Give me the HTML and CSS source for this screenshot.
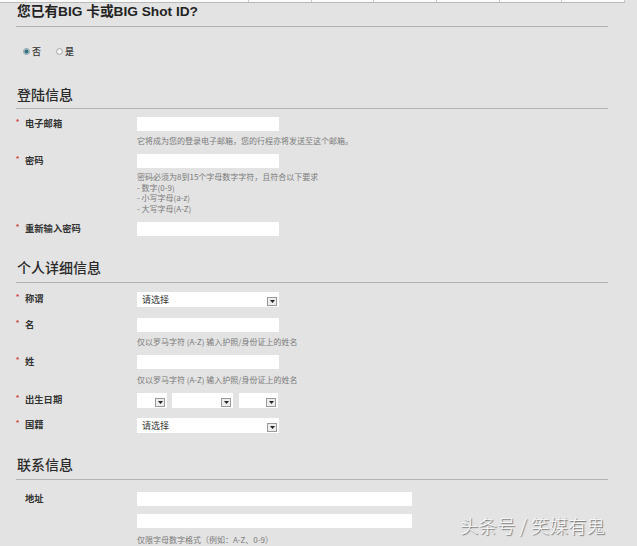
FILE: index.html
```html
<!DOCTYPE html>
<html lang="zh-CN">
<head>
<meta charset="utf-8">
<title>BIG Shot 注册</title>
<link rel="stylesheet" href="styles.css">
</head>
<body>
<div class="wrap">
  <div class="topbar">
    <span class="cell first"></span><span class="cell"></span><span class="cell"></span><span class="cell"></span><span class="cell"></span><span class="cell"></span><span class="cell"></span>
  </div>
  <div class="page">
    <h1 class="title">您已有BIG 卡或BIG Shot ID?</h1>
    <div class="radios">
      <span class="radio checked"></span><span class="rlabel">否</span>
      <span class="radio"></span><span class="rlabel">是</span>
    </div>

    <h2 class="section s1">登陆信息</h2>
    <div class="row r-email">
      <div class="label"><span class="req">*</span>电子邮箱</div>
      <div class="field">
        <input class="input" type="text">
        <div class="help">它将成为您的登录电子邮箱，您的行程亦将发送至这个邮箱。</div>
      </div>
    </div>
    <div class="row r-pass">
      <div class="label"><span class="req">*</span>密码</div>
      <div class="field">
        <input class="input" type="password">
        <div class="help multi">密码必须为8到15个字母数字字符，且符合以下要求<br>- 数字(0-9)<br>- 小写字母(a-z)<br>- 大写字母(A-Z)</div>
      </div>
    </div>
    <div class="row r-pass2">
      <div class="label"><span class="req">*</span>重新输入密码</div>
      <div class="field"><input class="input" type="password"></div>
    </div>

    <h2 class="section s2">个人详细信息</h2>
    <div class="row r-title">
      <div class="label"><span class="req">*</span>称谓</div>
      <div class="field"><div class="select wide"><span class="stext">请选择</span><span class="arrow"><svg width="5" height="3" viewBox="0 0 5 3"><path d="M0 0H5L2.5 3Z" fill="#222"/></svg></span></div></div>
    </div>
    <div class="row r-first">
      <div class="label"><span class="req">*</span>名</div>
      <div class="field">
        <input class="input" type="text">
        <div class="help">仅以罗马字符 (A-Z) 输入护照/身份证上的姓名</div>
      </div>
    </div>
    <div class="row r-last">
      <div class="label"><span class="req">*</span>姓</div>
      <div class="field">
        <input class="input" type="text">
        <div class="help h-last">仅以罗马字符 (A-Z) 输入护照/身份证上的姓名</div>
      </div>
    </div>
    <div class="row r-dob">
      <div class="label"><span class="req">*</span>出生日期</div>
      <div class="field dates">
        <div class="select d1"><span class="stext"></span><span class="arrow"><svg width="5" height="3" viewBox="0 0 5 3"><path d="M0 0H5L2.5 3Z" fill="#222"/></svg></span></div>
        <div class="select d2"><span class="stext"></span><span class="arrow"><svg width="5" height="3" viewBox="0 0 5 3"><path d="M0 0H5L2.5 3Z" fill="#222"/></svg></span></div>
        <div class="select d3"><span class="stext"></span><span class="arrow"><svg width="5" height="3" viewBox="0 0 5 3"><path d="M0 0H5L2.5 3Z" fill="#222"/></svg></span></div>
      </div>
    </div>
    <div class="row r-nat">
      <div class="label"><span class="req">*</span>国籍</div>
      <div class="field"><div class="select wide"><span class="stext">请选择</span><span class="arrow"><svg width="5" height="3" viewBox="0 0 5 3"><path d="M0 0H5L2.5 3Z" fill="#222"/></svg></span></div></div>
    </div>

    <h2 class="section s3">联系信息</h2>
    <div class="row r-addr">
      <div class="label"><span class="req blank"></span>地址</div>
      <div class="field">
        <input class="input long" type="text">
        <input class="input long second" type="text">
        <div class="help h-addr">仅限字母数字格式（例如：A-Z、0-9）</div>
      </div>
    </div>
  </div>
  <div class="watermark">头条号 / 笑媒有鬼</div>
</div>
</body>
</html>
```

FILE: styles.css
```css
html, body {
  margin: 0;
  padding: 0;
  background: #e3e3e3;
}
body {
  font-family: "Liberation Sans", "Noto Sans CJK SC", sans-serif;
  color: #333;
}
.wrap {
  position: relative;
  height: 546px;
  overflow: hidden;
}
.topbar {
  display: flex;
  width: 625px;
  height: 2px;
  background: #fbfbfb;
  border-bottom: 1px solid #b9b9b9;
}
.topbar .cell {
  width: 62px;
  border-right: 1px solid #c9c9c9;
}
.topbar .cell.first {
  width: 249px;
}
.page {
  width: 592px;
  padding-left: 16px;
}
.title {
  margin: 0;
  padding: 0 1px 5px;
  font-size: 13.7px;
  line-height: 18px;
  font-weight: bold;
  color: #222;
  border-bottom: 1px solid #b3b3b3;
}
.radios {
  display: flex;
  align-items: center;
  margin-top: 18px;
  height: 12px;
  padding-left: 7px;
  font-family: "Noto Sans CJK SC", sans-serif;
  font-size: 9px;
  font-weight: 500;
  color: #333;
}
.radio {
  width: 5px;
  height: 5px;
  border: 1px solid #a9a9a9;
  border-radius: 50%;
  background: #f6f6f6;
  box-shadow: inset 0 0 1px #ccc;
}
.radio.checked {
  background: radial-gradient(circle, #2f6f82 0 1.6px, #8fb4c0 2.2px, #eef3f5 3px);
  border-color: #8aa0a8;
}
.rlabel {
  margin-left: 2px;
  margin-right: 15px;
}
.section {
  margin: 0;
  font-family: "Noto Sans CJK SC", sans-serif;
  font-size: 14px;
  font-weight: 500;
  line-height: 20px;
  color: #2a2a2a;
  padding: 0 1px 5px;
  border-bottom: 1px solid #b3b3b3;
}
.s1 { margin-top: 27px; padding-bottom: 4px; }
.s2 { margin-top: 21px; }
.s3 { margin-top: 21px; }

.row {
  display: grid;
  grid-template-columns: 121px 1fr;
  margin-top: 8px;
}
.r-email { margin-top: 8px; }
.r-title { margin-top: 9px; }
.r-first { margin-top: 11px; }
.r-last { margin-top: 8px; }
.r-dob { margin-top: 8px; }
.r-nat { margin-top: 10px; }
.r-addr { margin-top: 12px; }

.label {
  font-family: "Noto Sans CJK SC", sans-serif;
  font-size: 9.3px;
  font-weight: 700;
  line-height: 12px;
  color: #333;
  white-space: nowrap;
}
.req {
  display: inline-block;
  width: 9px;
  color: #d43a3a;
  font-family: "Liberation Sans", sans-serif;
  font-size: 8px;
  line-height: 9px;
  vertical-align: top;
}
.field {
  display: flex;
  flex-direction: column;
  align-items: flex-start;
}
.input {
  display: block;
  box-sizing: border-box;
  width: 142px;
  height: 14px;
  margin: 0;
  padding: 0;
  border: none;
  background: #fff;
}
.input.long {
  width: 275px;
}
.input.second {
  margin-top: 8px;
}
.help {
  margin-top: 5px;
  font-family: "Noto Sans CJK SC", sans-serif;
  font-size: 8px;
  line-height: 10px;
  color: #7a7a7a;
  white-space: nowrap;
}
.help.multi {
  margin-top: 4px;
  line-height: 10.5px;
}
.help.h-last { margin-top: 6px; }
.help.h-addr { margin-top: 7px; }

.select {
  box-sizing: border-box;
  display: flex;
  justify-content: space-between;
  align-items: flex-end;
  height: 15px;
  padding: 0 2px 1px 5px;
  background: #fff;
  font-family: "Noto Sans CJK SC", sans-serif;
  font-size: 9px;
  color: #333;
}
.select .stext {
  align-self: center;
  line-height: 13px;
}
.select.wide { width: 142px; }
.dates {
  flex-direction: row;
}
.select.d1 { width: 30px; }
.select.d2 { width: 61px; margin-left: 5px; }
.select.d3 { width: 39px; margin-left: 6px; }
.arrow {
  box-sizing: border-box;
  display: flex;
  align-items: center;
  justify-content: center;
  width: 10px;
  height: 9px;
  border: 1px solid #9a9a9a;
  background: #ededed;
}
.arrow svg {
  display: block;
}
.watermark {
  position: absolute;
  left: 460px;
  top: 513px;
  font-family: "Noto Sans CJK SC", sans-serif;
  font-size: 18.5px;
  font-weight: 300;
  line-height: 24px;
  color: #fafafa;
  text-shadow: 1px 1px 1px #6d6d6d;
  white-space: nowrap;
}
```
